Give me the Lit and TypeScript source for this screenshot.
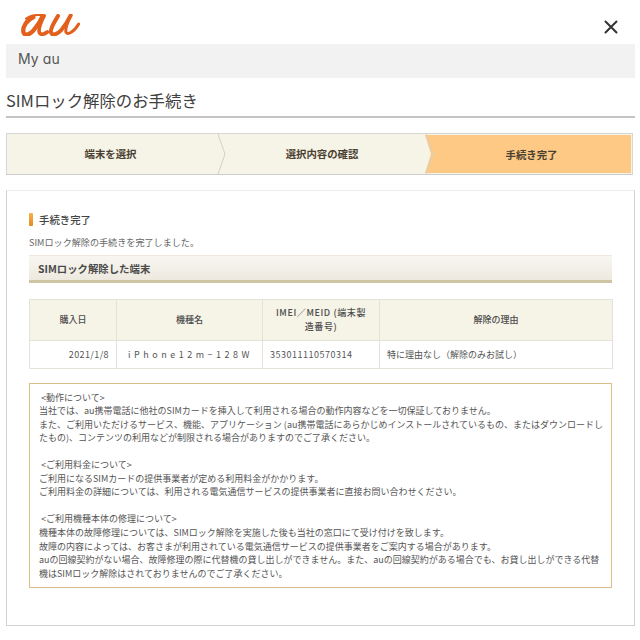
import { LitElement, html, css } from "lit";
import { customElement } from "lit/decorators.js";

@customElement("app-root")
export class AppRoot extends LitElement {
  static styles = css`
    :host { display: block; width: 640px; height: 640px; overflow: hidden; background: #fff; color: #444;
      font-family: "Noto Sans CJK JP", "Liberation Sans", sans-serif; font-size: 9px; }
    * { box-sizing: border-box; }
    .top { height: 44px; display: flex; align-items: flex-start; justify-content: space-between; padding: 14px 22px 0 21px; }
    .logo { width: 59px; height: 22px; display: block; }
    .close { width: 14px; height: 14px; margin-top: 6px; display: block; }
    .bar { margin: 0 5px 0 6px; height: 34px; background: #f2f2f2; padding: 0 0 6px 12px; display: flex; align-items: center;
      font: 14px "Inter", "Noto Sans", sans-serif; font-feature-settings: "cv11"; color: #555; letter-spacing: .1px; }
    .title { margin: 0 5px 0 6px; height: 40px; border-bottom: 2px solid #c4c4c4; font-size: 16.4px; font-weight: 400; color: #404040; line-height: 44px; white-space: nowrap; }
    .steps { margin: 15px 7px 0 6px; height: 42px; border: 1px solid #d6d6d6; border-bottom-color: #ccc; display: flex; background: #f6f3e7; padding: 0 1px 2px; position: relative; }
    .step { display: flex; align-items: center; justify-content: center; font-size: 10.4px; font-weight: 700; color: #4a4030; }
    .s1 { width: 211px; padding-right: 6px; } .s2 { width: 208px; padding-right: 2px; }
    .s3 { flex: 1; background: #fdc985; margin: 1px 0 -1px -2px; padding-left: 7px; clip-path: polygon(0 0, 100% 0, 100% 100%, 0 100%, 6px 50%); }
    .sep { position: absolute; top: 0; height: 40px; width: 9px; }
    .sep.a { left: 210px; } .sep.b { left: 418px; }
    .panel { margin: 15px 5px 0 6px; height: 436px; border: 1px solid #d2d2d2; border-top-color: #ececec; padding: 22px 22px 0; }
    .h { display: flex; align-items: center; gap: 6px; height: 13px; font-size: 10.4px; font-weight: 500; color: #444; }
    .h i { width: 4px; height: 13px; background: linear-gradient(#f6b04e, #e58a1e); border-radius: 1px; }
    .lead { margin-top: 10px; line-height: 13px; color: #666; font-size: 9.1px; }
    .sub { margin-top: 6px; height: 28px; padding-left: 9px; display: flex; align-items: center; font-size: 10.4px; font-weight: 700; color: #4a4a4a;
      background: linear-gradient(#f8f6f1, #ede9df); border-bottom: 3px solid #cfc4a4; border-top: 1px solid #eee9dc; padding-top: 1px; }
    table { margin-top: 16px; width: 583px; border-collapse: collapse; table-layout: fixed; }
    .c1 { width: 87px; } .c2 { width: 146px; } .c3 { width: 117px; } .c4 { width: 233px; }
    th, td { border: 1px solid #e4e2da; padding: 0 7px; }
    th { height: 41px; background: #f6f3e7; font-size: 9px; font-weight: 500; color: #4c4c4c; line-height: 14px; }
    th.imei { letter-spacing: .6px; padding: 0; white-space: nowrap; }
    td { height: 28px; color: #555; white-space: nowrap; }
    .r { text-align: right; letter-spacing: .4px; }
    .sp { letter-spacing: 3.5px; text-align: center; padding-left: 9px; }
    .num { letter-spacing: .5px; }
    .note { margin-top: 14px; height: 205px; border: 1px solid #dcbf85; padding: 6.5px 9px 0; line-height: 13.55px; color: #555; white-space: nowrap; }
    .head { padding-left: 2px; }
    .gap { height: 13.55px; }
  `;

  render() {
    return html`
      <div class="top">
        <svg class="logo" viewBox="63 42 177 66" fill="none" stroke="#e2601c" stroke-linecap="round" stroke-linejoin="round">
          <path stroke-width="6" d="M78 56C95 44 120 44 135 47" />
          <path stroke-width="13" d="M100 52C80 60 68 80 70 95C72 108 88 106 100 92C112 78 122 62 128 48" />
          <path stroke-width="11" d="M132 48C122 68 114 85 118 97C121 106 132 104 142 96" />
          <path stroke-width="12" d="M174 48C164 65 150 85 153 97C156 108 172 104 184 90C196 76 204 62 212 46" />
          <path stroke-width="9" d="M212 48C204 65 194 85 198 97C203 106 222 96 236 72" />
        </svg>
        <svg class="close" viewBox="0 0 14 14" stroke="#333" stroke-width="2" stroke-linecap="round"><path d="M1.5 1.5L12.5 12.5M12.5 1.5L1.5 12.5"/></svg>
      </div>
      <div class="bar">My au</div>
      <h1 class="title">SIMロック解除のお手続き</h1>
      <div class="steps">
        <div class="step s1">端末を選択</div>
        <div class="step s2">選択内容の確認</div>
        <div class="step s3">手続き完了</div>
        <svg class="sep a" viewBox="0 0 9 40" fill="none" stroke="#d4d0c4"><path d="M1 0L8 20L1 40"/></svg>
        <svg class="sep b" viewBox="0 0 9 40" fill="none" stroke="#d4d0c4"><path d="M1 0L8 20L1 40"/></svg>
      </div>
      <div class="panel">
        <div class="h"><i></i>手続き完了</div>
        <div class="lead">SIMロック解除の手続きを完了しました。</div>
        <div class="sub">SIMロック解除した端末</div>
        <table>
          <colgroup><col class="c1"/><col class="c2"/><col class="c3"/><col class="c4"/></colgroup>
          <tr><th>購入日</th><th>機種名</th><th class="imei">IMEI／MEID (端末製<br/>造番号)</th><th>解除の理由</th></tr>
          <tr><td class="r">2021/1/8</td><td class="sp">iPhone12m−128W</td><td class="num">353011110570314</td><td>特に理由なし（解除のみお試し）</td></tr>
        </table>
        <div class="note">
          <div class="head">&lt;動作について&gt;</div>
          当社では、au携帯電話に他社のSIMカードを挿入して利用される場合の動作内容などを一切保証しておりません。<br/>
          また、ご利用いただけるサービス、機能、アプリケーション (au携帯電話にあらかじめインストールされているもの、またはダウンロードし<br/>
          たもの)、コンテンツの利用などが制限される場合がありますのでご了承ください。
          <div class="gap"></div>
          <div class="head">&lt;ご利用料金について&gt;</div>
          ご利用になるSIMカードの提供事業者が定める利用料金がかかります。<br/>
          ご利用料金の詳細については、利用される電気通信サービスの提供事業者に直接お問い合わせください。
          <div class="gap"></div>
          <div class="head">&lt;ご利用機種本体の修理について&gt;</div>
          機種本体の故障修理については、SIMロック解除を実施した後も当社の窓口にて受け付けを致します。<br/>
          故障の内容によっては、お客さまが利用されている電気通信サービスの提供事業者をご案内する場合があります。<br/>
          auの回線契約がない場合、故障修理の際に代替機の貸し出しができません。また、auの回線契約がある場合でも、お貸し出しができる代替<br/>
          機はSIMロック解除はされておりませんのでご了承ください。
        </div>
      </div>
    `;
  }
}
